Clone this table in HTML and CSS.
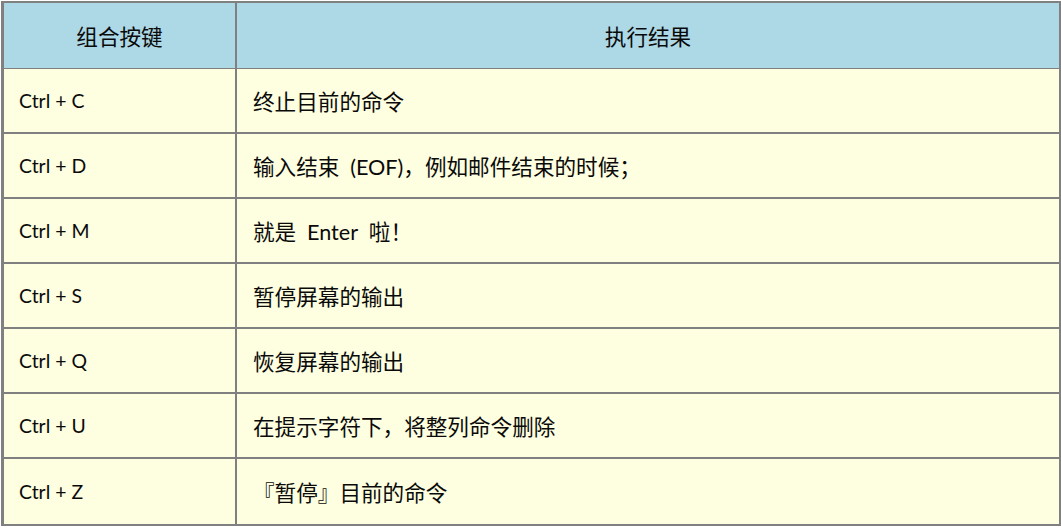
FILE: index.html
```html
<!DOCTYPE html>
<html lang="zh-CN">
<head>
<meta charset="utf-8">
<title>组合按键</title>
<link rel="stylesheet" href="styles.css">
</head>
<body>
<table class="keys">
  <thead>
    <tr><th class="c1">组合按键</th><th class="c2">执行结果</th></tr>
  </thead>
  <tbody>
    <tr><td class="c1">Ctrl + C</td><td class="c2">终止目前的命令</td></tr>
    <tr><td class="c1">Ctrl + D</td><td class="c2">输入结束&ensp;(EOF)，例如邮件结束的时候；</td></tr>
    <tr><td class="c1">Ctrl + M</td><td class="c2">就是&ensp;Enter&ensp;啦！</td></tr>
    <tr><td class="c1">Ctrl + S</td><td class="c2">暂停屏幕的输出</td></tr>
    <tr><td class="c1">Ctrl + Q</td><td class="c2">恢复屏幕的输出</td></tr>
    <tr><td class="c1">Ctrl + U</td><td class="c2">在提示字符下，将整列命令删除</td></tr>
    <tr><td class="c1">Ctrl + Z</td><td class="c2">『暂停』目前的命令</td></tr>
  </tbody>
</table>
</body>
</html>
```
FILE: styles.css
```css
html, body {
  margin: 0;
  padding: 0;
  background: #ffffff;
}
body {
  padding: 1px 0 0 1px;
  font-family: "Lato", "Noto Sans CJK SC", sans-serif;
  font-size: 19.4px;
  color: #0a0a0a;
}
.keys {
  width: 1060px;
  border-collapse: separate;
  border-spacing: 0;
  border-style: solid;
  border-color: #808080;
  border-width: 2px 2px 2px 3px;
}
.keys th {
  background: #add8e6;
  height: 65px;
  padding: 0;
  font-weight: normal;
  text-align: center;
  border-bottom: 1px solid #808080;
  font-size: 21.6px;
}
.keys td {
  background: #fefee0;
  height: 63px;
  padding: 0 0 0 15px;
  text-align: left;
  border-bottom: 2px solid #808080;
}
.keys tbody tr:last-child td {
  border-bottom: 0;
  height: 65px;
}
.keys .c1 {
  width: 233px;
  border-right: 2px solid #808080;
  box-sizing: border-box;
}
.keys td.c2 {
  padding-left: 16px;
  font-size: 21.6px;
}
```
